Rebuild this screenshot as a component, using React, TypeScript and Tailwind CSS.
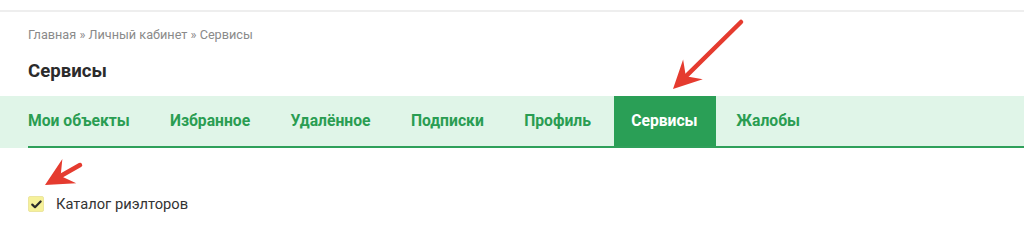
import React from 'react';

const tabs = ['Мои объекты', 'Избранное', 'Удалённое', 'Подписки', 'Профиль', 'Сервисы', 'Жалобы'];
const active = 'Сервисы';

// red annotation arrow, tip at (x2,y2)
const Arrow: React.FC<{ x1: number; y1: number; x2: number; y2: number }> = ({ x1, y1, x2, y2 }) => {
  const dx = x2 - x1;
  const dy = y2 - y1;
  const len = Math.sqrt(dx * dx + dy * dy);
  const ux = dx / len;
  const uy = dy / len;
  const head = 28;
  const half = 14;
  const notch = 18;
  const bx = x2 - ux * head;
  const by = y2 - uy * head;
  const p1 = `${bx - uy * half},${by + ux * half}`;
  const p2 = `${bx + uy * half},${by - ux * half}`;
  const nx = x2 - ux * notch;
  const ny = y2 - uy * notch;
  return (
    <g>
      <line x1={x1} y1={y1} x2={nx} y2={ny} stroke="#e53b2f" strokeWidth="4.5" strokeLinecap="round" />
      <polygon points={`${x2},${y2} ${p1} ${nx},${ny} ${p2}`} fill="#e53b2f" />
    </g>
  );
};

export default function App() {
  return (
    <div className="relative w-[1024px] h-[248px] bg-white overflow-hidden" style={{ fontFamily: 'Roboto, "Liberation Sans", sans-serif' }}>
      <div className="mt-[10px] h-[2px] bg-[#eeeeee]" />

      <div className="pl-[28px] pt-[16px] text-[12.7px] leading-[14px] text-[#8a8a8a]">
        Главная » Личный кабинет » Сервисы
      </div>

      <h1 className="pl-[28px] mt-[18px] text-[18.6px] leading-[22px] font-bold text-[#2b2b2b]">Сервисы</h1>

      {/* Tabs */}
      <div className="mt-[14px] bg-[#e0f5e8]">
        <ul className="ml-[28px] flex h-[52px] border-b-2 border-[#2fa05a]">
          {tabs.map((t, i) => (
            <li
              key={t}
              className={`flex items-center text-[15.7px] font-bold ${
                t === active
                  ? 'ml-[3px] pl-[17px] pr-[18.5px] bg-[#2a9f56] text-white'
                  : i === 0
                  ? 'pr-[20px] text-[#2a9d52]'
                  : 'px-[20.2px] text-[#2a9d52]'
              }`}
            >
              {t}
            </li>
          ))}
        </ul>
      </div>

      <label className="flex items-center gap-[12px] pl-[28px] mt-[45px]">
        <span className="flex items-center justify-center w-[16px] h-[16px] rounded-[2px] bg-[#f6f19a] border border-[#ece6a0]">
          <svg width="11" height="9" viewBox="0 0 11 9">
            <path d="M1.3 4.6 L4 7.2 L9.6 1.5" fill="none" stroke="#2b2b2b" strokeWidth="2.2" strokeLinecap="round" strokeLinejoin="round" />
          </svg>
        </span>
        <span className="text-[14.7px] text-[#333333]">Каталог риэлторов</span>
      </label>

      <svg className="absolute left-0 top-0 pointer-events-none" width="1024" height="248" viewBox="0 0 1024 248">
        <Arrow x1={741} y1={22} x2={673} y2={89} />
        <Arrow x1={80} y1={165} x2={45} y2={185} />
      </svg>
    </div>
  );
}
